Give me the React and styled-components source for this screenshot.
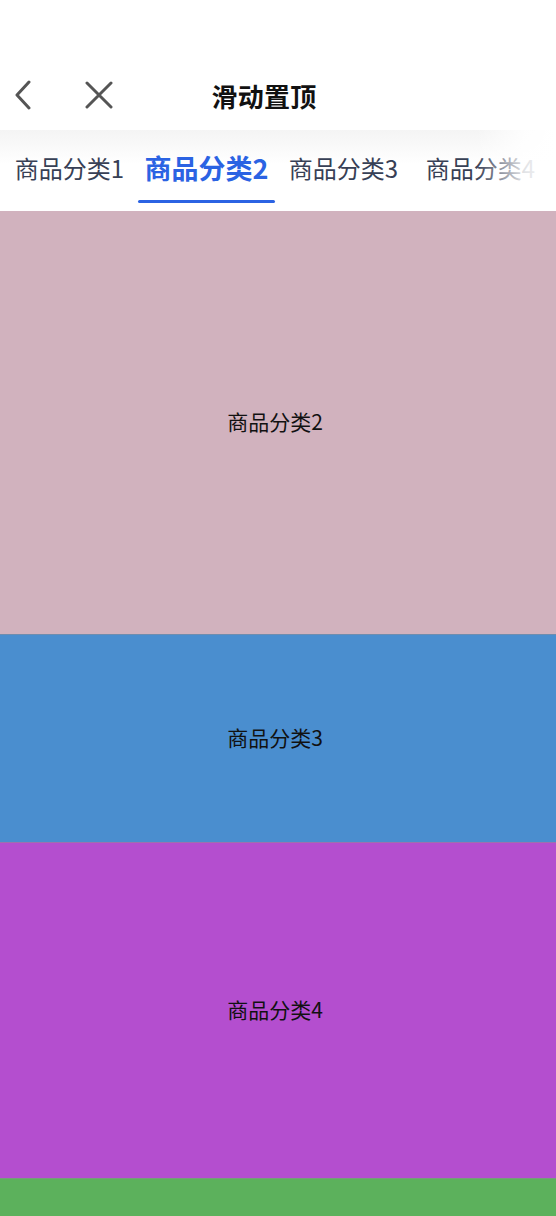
import React from "react";
import styled, { createGlobalStyle } from "styled-components";

const Global = createGlobalStyle`
  html, body { margin: 0; padding: 0; background: #fff; }
  body { font-family: "Noto Sans CJK SC", "Noto Sans", sans-serif; overflow: hidden; }
`;

const Page = styled.div`
  width: 556px;
  height: 1216px;
  overflow: hidden;
  display: flex;
  flex-direction: column;
`;

const StatusSpace = styled.div`
  height: 60px;
  flex: none;
`;

const NavBar = styled.div`
  height: 70px;
  flex: none;
  display: grid;
  grid-template-columns: 1fr auto 1fr;
  align-items: center;
`;

const NavLeft = styled.div`
  display: flex;
  align-items: center;
  gap: 47px;
  padding-left: 7px;
`;

const IconBtn = styled.button`
  border: 0;
  background: none;
  padding: 0;
  width: 30px;
  height: 32px;
  display: flex;
  align-items: center;
  justify-content: center;
`;

const Title = styled.h1`
  margin: 0 0 0 -28px;
  font-size: 26px;
  font-weight: 700;
  color: #111;
  letter-spacing: 0.3px;
`;

const TabBar = styled.div`
  position: relative;
  height: 81px;
  flex: none;
  display: flex;
  padding-left: 1px;
  background: linear-gradient(to bottom, #f4f4f4 0px, #ffffff 34px);
  overflow: hidden;
`;

const Tab = styled.div`
  position: relative;
  flex: none;
  width: 137px;
  display: flex;
  align-items: center;
  justify-content: center;
  padding-bottom: 6px;
  font-size: ${(p) => (p.$active ? "27px" : "24px")};
  font-weight: ${(p) => (p.$active ? 700 : 400)};
  color: ${(p) => (p.$active ? "#2b63e3" : "#374055")};
  white-space: nowrap;
`;

const Underline = styled.span`
  position: absolute;
  left: 0;
  right: 0;
  bottom: 8px;
  height: 3px;
  border-radius: 2px;
  background: #2b63e3;
`;

const Fade = styled.div`
  position: absolute;
  top: 0;
  right: 0;
  bottom: 0;
  width: 80px;
  background: linear-gradient(to right, rgba(255,255,255,0) 0%, rgba(255,255,255,0.85) 60%, #fff 100%);
  pointer-events: none;
`;

const Section = styled.section`
  flex: none;
  height: ${(p) => p.$h}px;
  background: ${(p) => p.$bg};
  border-top: ${(p) => (p.$line ? "1px solid rgba(140,140,150,0.55)" : "none")};
  box-sizing: border-box;
  display: flex;
  align-items: center;
  justify-content: center;
  padding: 0 6px 4px 0;
  font-size: 21px;
  color: #111;
`;

const tabs = ["商品分类1", "商品分类2", "商品分类3", "商品分类4"];
const sections = [
  { label: "商品分类2", h: 423, bg: "#d1b2be" },
  { label: "商品分类3", h: 208, bg: "#4a8ecf", line: true },
  { label: "商品分类4", h: 336, bg: "#b44ecf", line: true },
  { label: "", h: 60, bg: "#5cb15c", line: true },
];

export default function App() {
  return (
    <Page>
      <Global />
      <StatusSpace />
      <NavBar>
        <NavLeft>
          <IconBtn aria-label="back">
            <svg width="20" height="30" viewBox="0 0 20 30">
              <path d="M17 2 L5 15 L17 28" fill="none" stroke="#555" strokeWidth="3" strokeLinecap="round" strokeLinejoin="round" />
            </svg>
          </IconBtn>
          <IconBtn aria-label="close">
            <svg width="28" height="28" viewBox="0 0 28 28">
              <path d="M2 2 L26 26 M26 2 L2 26" fill="none" stroke="#555" strokeWidth="3" strokeLinecap="round" />
            </svg>
          </IconBtn>
        </NavLeft>
        <Title>滑动置顶</Title>
        <div />
      </NavBar>
      <TabBar>
        {tabs.map((t, i) => (
          <Tab key={t} $active={i === 1}>
            {t}
            {i === 1 && <Underline />}
          </Tab>
        ))}
        <Fade />
      </TabBar>
      {sections.map((s, i) => (
        <Section key={i} $h={s.h} $bg={s.bg} $line={s.line}>
          {s.label}
        </Section>
      ))}
    </Page>
  );
}
